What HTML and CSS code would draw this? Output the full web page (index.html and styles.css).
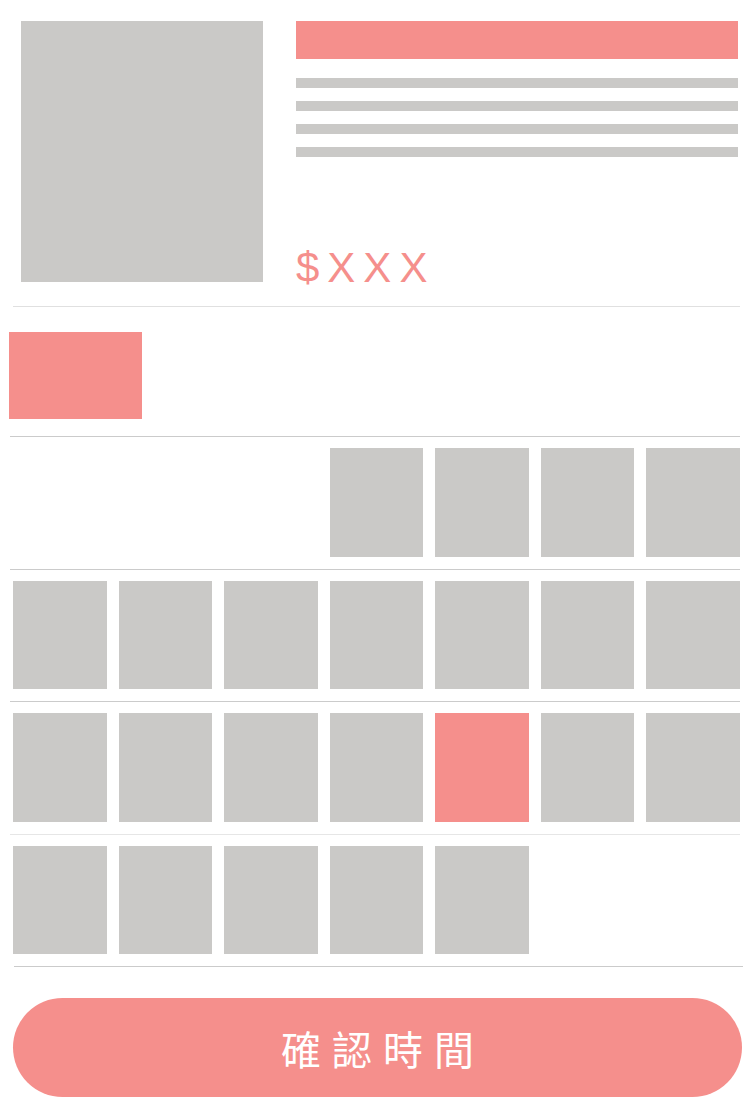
FILE: index.html
```html
<!DOCTYPE html>
<html>
<head>
  <title>選擇時間</title>
  <link rel="stylesheet" href="styles.css">
</head>
<body>
  <div class="product">
    <div class="photo"></div>
    <div class="info">
      <div class="title"></div>
      <div class="line"></div>
      <div class="line"></div>
      <div class="line"></div>
      <div class="line"></div>
      <div class="price">$XXX</div>
    </div>
  </div>

  <div class="sep light"></div>

  <div class="month"></div>

  <div class="week">
    <div class="day empty"></div>
    <div class="day empty"></div>
    <div class="day empty"></div>
    <div class="day"></div>
    <div class="day"></div>
    <div class="day"></div>
    <div class="day"></div>
  </div>
  <div class="week">
    <div class="day"></div>
    <div class="day"></div>
    <div class="day"></div>
    <div class="day"></div>
    <div class="day"></div>
    <div class="day"></div>
    <div class="day"></div>
  </div>
  <div class="week">
    <div class="day"></div>
    <div class="day"></div>
    <div class="day"></div>
    <div class="day"></div>
    <div class="day active"></div>
    <div class="day"></div>
    <div class="day"></div>
  </div>
  <div class="week light">
    <div class="day"></div>
    <div class="day"></div>
    <div class="day"></div>
    <div class="day"></div>
    <div class="day"></div>
    <div class="day empty"></div>
    <div class="day empty"></div>
  </div>
  <div class="sep end"></div>

  <button class="confirm">確認時間</button>
</body>
</html>
```

FILE: styles.css
```css
body { margin: 0; background: #fff; font-family: "Liberation Sans", "Noto Sans CJK TC", sans-serif; }

.product { display: flex; gap: 33px; padding: 21px 11px 0 21px; }
.photo { width: 242px; height: 261px; background: #cac9c7; }
.info { flex: 1; display: flex; flex-direction: column; }
.title { height: 38px; background: #f58f8c; margin-bottom: 19px; }
.line { height: 10px; background: #cac9c7; margin-bottom: 13px; }
.price { margin-top: auto; margin-bottom: -7px; font-size: 42px; line-height: 42px; letter-spacing: 8px; color: #f58f8c; }

.sep { height: 1px; background: #cbcbcb; margin: 0 9px 0 13px; }
.sep.light { margin-top: 24px; background: #e0e0e0; }
.sep.end { margin: 0 6px 0 14px; }

.month { width: 133px; height: 87px; background: #f58f8c; margin: 25px 0 17px 9px; }

.week { display: grid; grid-template-columns: repeat(7, 1fr); column-gap: 12px; margin: 0 9px 0 10px; padding: 11px 0 12px 3px; border-top: 1px solid #cbcbcb; }
.week.light { border-top-color: #e6e6e6; }
.day { height: 108.5px; background: #cac9c7; }
.day.empty { background: none; }
.day.active { background: #f58f8c; }

.confirm { display: block; width: 729px; height: 99px; margin: 31px 0 0 13px; border: none; border-radius: 50px; background: #f58f8c; color: #fff; font-family: "Noto Sans CJK TC", sans-serif; font-size: 40px; letter-spacing: 11px; padding: 0 0 0 11px; }
```
